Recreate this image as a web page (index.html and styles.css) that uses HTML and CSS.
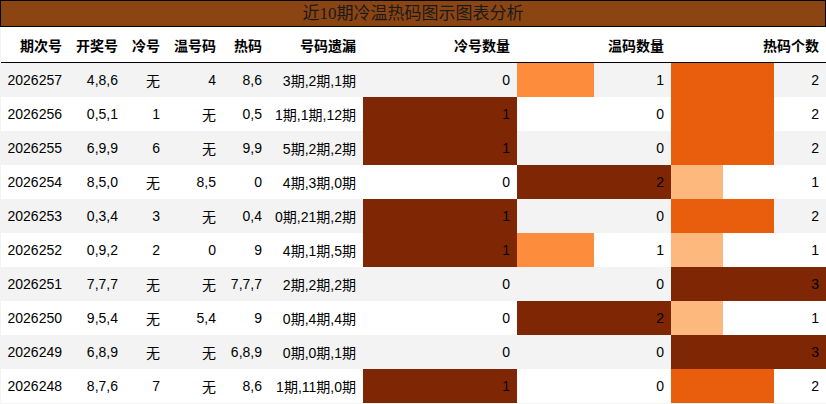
FILE: index.html
```html
<!DOCTYPE html>
<html lang="zh">
<head>
<meta charset="utf-8">
<title>近10期冷温热码图示图表分析</title>
<link rel="stylesheet" href="styles.css">
</head>
<body>
<div class="title">近10期冷温热码图示图表分析</div>
<table class="grid">
  <colgroup>
    <col class="c1"><col class="c2"><col class="c3"><col class="c4"><col class="c5"><col class="c6"><col class="c7"><col class="c8"><col class="c9">
  </colgroup>
  <thead>
    <tr><th>期次号</th><th>开奖号</th><th>冷号</th><th>温号码</th><th>热码</th><th>号码遗漏</th><th>冷号数量</th><th>温码数量</th><th>热码个数</th></tr>
  </thead>
  <tbody>
    <tr><td>2026257</td><td>4,8,6</td><td>无</td><td>4</td><td>8,6</td><td>3期,2期,1期</td><td class="bar">0</td><td class="bar" style="--w:50%;--c:#fd8d3c">1</td><td class="bar" style="--w:66.7%;--c:#e95e0d">2</td></tr>
    <tr><td>2026256</td><td>0,5,1</td><td>1</td><td>无</td><td>0,5</td><td>1期,1期,12期</td><td class="bar" style="--w:100%;--c:#7f2704">1</td><td class="bar">0</td><td class="bar" style="--w:66.7%;--c:#e95e0d">2</td></tr>
    <tr><td>2026255</td><td>6,9,9</td><td>6</td><td>无</td><td>9,9</td><td>5期,2期,2期</td><td class="bar" style="--w:100%;--c:#7f2704">1</td><td class="bar">0</td><td class="bar" style="--w:66.7%;--c:#e95e0d">2</td></tr>
    <tr><td>2026254</td><td>8,5,0</td><td>无</td><td>8,5</td><td>0</td><td>4期,3期,0期</td><td class="bar">0</td><td class="bar" style="--w:100%;--c:#7f2704">2</td><td class="bar" style="--w:33.3%;--c:#fdb97d">1</td></tr>
    <tr><td>2026253</td><td>0,3,4</td><td>3</td><td>无</td><td>0,4</td><td>0期,21期,2期</td><td class="bar" style="--w:100%;--c:#7f2704">1</td><td class="bar">0</td><td class="bar" style="--w:66.7%;--c:#e95e0d">2</td></tr>
    <tr><td>2026252</td><td>0,9,2</td><td>2</td><td>0</td><td>9</td><td>4期,1期,5期</td><td class="bar" style="--w:100%;--c:#7f2704">1</td><td class="bar" style="--w:50%;--c:#fd8d3c">1</td><td class="bar" style="--w:33.3%;--c:#fdb97d">1</td></tr>
    <tr><td>2026251</td><td>7,7,7</td><td>无</td><td>无</td><td>7,7,7</td><td>2期,2期,2期</td><td class="bar">0</td><td class="bar">0</td><td class="bar" style="--w:100%;--c:#7f2704">3</td></tr>
    <tr><td>2026250</td><td>9,5,4</td><td>无</td><td>5,4</td><td>9</td><td>0期,4期,4期</td><td class="bar">0</td><td class="bar" style="--w:100%;--c:#7f2704">2</td><td class="bar" style="--w:33.3%;--c:#fdb97d">1</td></tr>
    <tr><td>2026249</td><td>6,8,9</td><td>无</td><td>无</td><td>6,8,9</td><td>0期,0期,1期</td><td class="bar">0</td><td class="bar">0</td><td class="bar" style="--w:100%;--c:#7f2704">3</td></tr>
    <tr><td>2026248</td><td>8,7,6</td><td>7</td><td>无</td><td>8,6</td><td>1期,11期,0期</td><td class="bar" style="--w:100%;--c:#7f2704">1</td><td class="bar">0</td><td class="bar" style="--w:66.7%;--c:#e95e0d">2</td></tr>
  </tbody>
</table>
</body>
</html>
```
FILE: styles.css
```css
html, body {
  margin: 0;
  padding: 0;
}
body {
  background: #f3f3f3;
  width: 826px;
  height: 404px;
  overflow: hidden;
}
.title {
  box-sizing: border-box;
  height: 27px;
  border: 1px solid #000;
  background: #8b4513;
  color: #1a1a1a;
  font-family: "Liberation Serif", "Noto Sans CJK SC", serif;
  font-size: 17px;
  line-height: 25px;
  text-align: center;
}
.grid {
  margin-left: 1px;
  width: 825px;
  table-layout: fixed;
  border-collapse: separate;
  border-spacing: 0;
  font-family: "Liberation Sans", "Noto Sans CJK SC", sans-serif;
  font-size: 14px;
  color: #000;
}
.c1 { width: 68px; }
.c2 { width: 56px; }
.c3 { width: 42px; }
.c4 { width: 56px; }
.c5 { width: 46px; }
.c6 { width: 94px; }
.c7 { width: 154px; }
.c8 { width: 154px; }
.c9 { width: 155px; }
.grid th,
.grid td {
  box-sizing: border-box;
  padding: 0 7px 0 0;
  text-align: right;
  white-space: nowrap;
  vertical-align: middle;
}
.grid th {
  height: 36px;
  background: #fff;
  font-weight: bold;
  border-bottom: 1px solid #000;
}
.grid td {
  height: 34px;
}
.grid tbody tr:nth-child(odd) {
  background: #f3f3f3;
}
.grid tbody tr:nth-child(even) {
  background: #fff;
}
.bar {
  --w: 0%;
  --c: transparent;
  background: linear-gradient(90deg, var(--c) var(--w), transparent var(--w));
}
```
